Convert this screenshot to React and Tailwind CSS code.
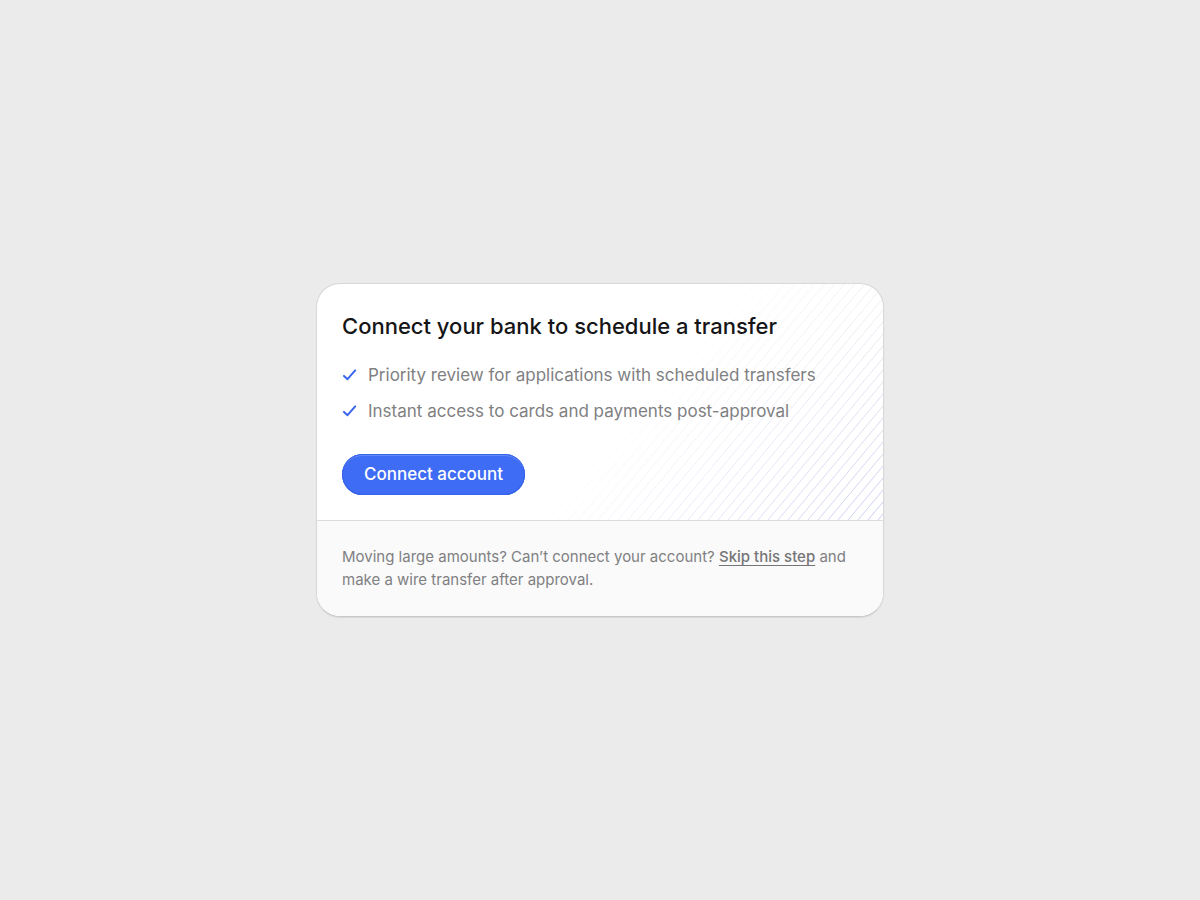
const benefits = [
  'Priority review for applications with scheduled transfers',
  'Instant access to cards and payments post-approval',
];

const CheckIcon = () => (
  <svg className="h-4 w-4 shrink-0" viewBox="0 0 16 16" fill="none" aria-hidden="true">
    <path d="M2 8.9L5.5 12.2L13.2 3.4" stroke="#3a66ee" strokeWidth="2" strokeLinecap="round" strokeLinejoin="round" />
  </svg>
);

// Diagonal hatching that fades out towards the top left of the card
const Stripes = () => (
  <svg
    className="pointer-events-none absolute right-0 bottom-0"
    width="566"
    height="236"
    viewBox="0 0 566 236"
    aria-hidden="true"
  >
    <defs>
      <linearGradient id="ink" gradientUnits="userSpaceOnUse" x1="0" y1="0" x2="0" y2="236">
        <stop offset="0" stopColor="#d9d9e4" />
        <stop offset="1" stopColor="#c8cbf0" />
      </linearGradient>
      <pattern id="hatch" width="10" height="12" x="561" y="236" patternUnits="userSpaceOnUse">
        <path d="M-5 18L15 -6M-5 6L5 -6M5 18L15 6" stroke="#fff" strokeWidth="1" />
      </pattern>
      <linearGradient id="fade" gradientUnits="userSpaceOnUse" x1="357" y1="62" x2="566" y2="236">
        <stop offset="0" stopColor="#fff" stopOpacity="0" />
        <stop offset="0.5" stopColor="#fff" stopOpacity="0.45" />
        <stop offset="1" stopColor="#fff" stopOpacity="1" />
      </linearGradient>
      <mask id="fade-mask" maskUnits="userSpaceOnUse" x="0" y="0" width="566" height="236">
        <rect width="566" height="236" fill="url(#fade)" />
      </mask>
      <mask id="hatch-mask" maskUnits="userSpaceOnUse" x="0" y="0" width="566" height="236">
        <rect width="566" height="236" fill="url(#hatch)" />
      </mask>
    </defs>
    <g mask="url(#fade-mask)">
      <rect width="566" height="236" fill="url(#ink)" mask="url(#hatch-mask)" />
    </g>
  </svg>
);

const ConnectBankCard = () => (
  <section className="w-full max-w-[568px] overflow-hidden rounded-3xl border border-[#d8d8d8] border-b-[#c8c8c8] bg-white shadow-[0_1px_1px_rgba(0,0,0,0.08)]">
    <div className="relative border-b border-[#dcdcde] p-[25px]">
      <Stripes />
      <div className="relative">
        <h1 className="text-[22px] leading-[34px] font-medium text-[#151517]">
          Connect your bank to schedule a transfer
        </h1>
        <ul className="mt-[14px] flex flex-col">
          {benefits.map((text) => (
            <li key={text} className="flex items-center gap-[10px] text-[17px] leading-9 text-[#808082]">
              <CheckIcon />
              {text}
            </li>
          ))}
        </ul>
        <button
          type="button"
          className="mt-[25px] h-[41px] cursor-pointer rounded-full bg-[#3e6cf4] px-[22px] text-[17px] font-medium text-white shadow-[inset_0_0_0_1px_#3763ea,inset_0_2px_0_#6488f7,inset_0_-1px_0_#3058d8]"
        >
          Connect account
        </button>
      </div>
    </div>
    <p className="bg-[#fafafa] px-[25px] pt-6 pb-[25px] text-[15px] leading-[23px] text-[#808082]">
      Moving large amounts? Can’t connect your account?{' '}
      <a
        href="#skip"
        className="font-medium text-[#757577] underline decoration-1 underline-offset-3 [text-decoration-skip-ink:none]"
      >
        Skip this step
      </a>{' '}
      and make a wire transfer after approval.
    </p>
  </section>
);

export default function App() {
  return (
    <main className="flex min-h-screen items-center justify-center bg-[#ebebeb] p-4 font-['Inter',sans-serif]">
      <ConnectBankCard />
    </main>
  );
}
